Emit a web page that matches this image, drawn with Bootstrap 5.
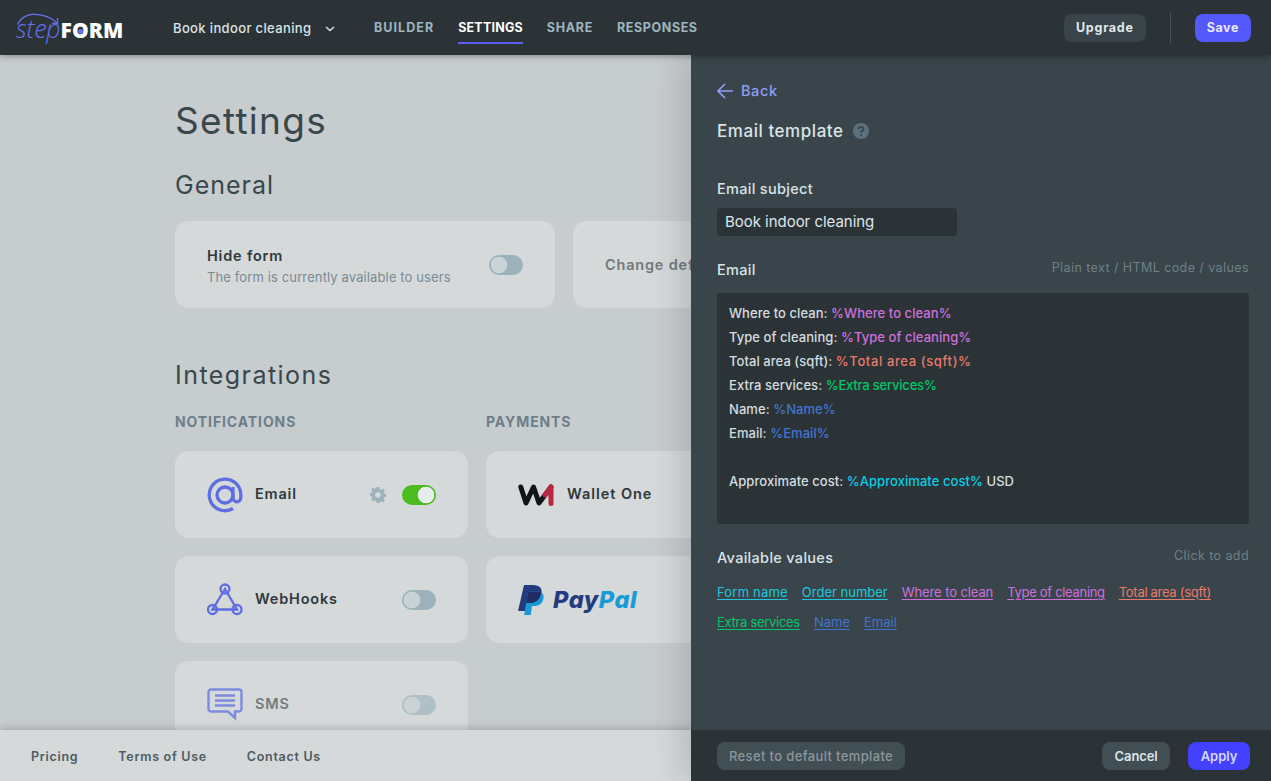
<!DOCTYPE html>
<html lang="en">
<head>
<meta charset="utf-8">
<title>stepFORM settings</title>
<link rel="stylesheet" href="https://cdn.jsdelivr.net/npm/bootstrap@5.3.0/dist/css/bootstrap.min.css">
<style>
html,body{height:100%}
body{font-family:Inter,"Open Sans","Liberation Sans",sans-serif;background:#c7cccf;overflow:hidden;color:#2f383b}
.app-shell{height:781px;width:1271px}
.top-bar{height:55px;background:#2b3336;padding:0 20px 0 16px;position:relative;z-index:3;box-shadow:0 2px 6px rgba(0,0,0,.3);flex:none}
.brand-wrap{width:157px;position:relative;height:55px;line-height:55px;padding-top:1px;flex:none;white-space:nowrap}
.brand-step{font-family:"Open Sans",sans-serif;font-style:italic;font-weight:300;font-size:25px;color:#6470ef;letter-spacing:-.2px}
.brand-form{font-family:"Open Sans",sans-serif;font-weight:800;font-size:21px;color:#fff;letter-spacing:.1px}
.brand-o{position:relative}
.brand-dot{position:absolute;left:50%;top:50%;width:5px;height:5px;margin:-1px 0 0 -2.5px;border-radius:50%;background:#6470ef}
.brand-arc{position:absolute;left:0;top:12px;width:60px;height:16px}
.form-pick{width:201px;font-size:13px;font-weight:500;color:#dce3e6;letter-spacing:.36px;flex:none;padding-top:2px}
.form-pick svg{margin-left:14px}
.tab-row{gap:24px;height:55px}
.tab-row .nav-link{padding:0;height:55px;line-height:55px;font-size:12.5px;font-weight:700;color:#9fb5c0;position:relative}
.tab-row li:nth-child(1) .nav-link{letter-spacing:1.05px}
.tab-row li:nth-child(2) .nav-link{letter-spacing:.2px}
.tab-row li:nth-child(3) .nav-link{letter-spacing:.7px}
.tab-row li:nth-child(4) .nav-link{letter-spacing:.6px}
.tab-row .nav-link.active{color:#fff}
.tab-row .nav-link.active::after{content:"";position:absolute;left:0;right:0;top:42px;height:2px;background:#5b5ff5}
.btn-flat{height:28px;padding:0 12px;font-size:12.5px;font-weight:700;border:0;border-radius:8px;line-height:28px}
.btn-slate{background:#39454a;color:#e0e7ea;letter-spacing:.75px}
.btn-slate:hover{background:#39454a;color:#e0e7ea}
.btn-blue{background:#5558fb;color:#e8e9ff;letter-spacing:.6px}
.btn-blue:hover{background:#5558fb;color:#e8e9ff}
.v-rule{width:1px;height:32px;background:#46535a;margin:0 24px}
.body-row{height:726px}
.left-side{width:691px;flex:none;overflow:hidden}
.left-scroll{padding-left:175px;overflow:hidden;flex:1 1 0;min-height:0}
.page-title{font-size:37px;line-height:44px;font-weight:400;color:#3a474a;margin:44px 0 0;letter-spacing:1.3px}
.sect-title{font-size:25px;line-height:30px;font-weight:400;color:#3a474a;margin:27px 0 0;letter-spacing:1px}
.sect-two{margin-top:52px;letter-spacing:1.45px}
.tile{background:#d5d9da;border:0;border-radius:14px;height:87px;flex:none;padding:0 32px;color:#2f383b;flex-direction:row;align-items:center}
.tile-wide{width:380px}
.tile-mid{width:293px}
.tile-stack{gap:18px;margin-top:21px;width:900px}
.tile-title{font-size:14.5px;font-weight:600;line-height:18px;letter-spacing:.8px}
.tile-mid .tile-title{margin-top:-2px}
.tile-text{padding-top:4px}
.tile-sub{font-size:13px;line-height:18px;color:#7a8b94;letter-spacing:.12px;margin-top:3px}
.dim-text{color:#72797d}
.col-label{font-size:14px;line-height:20px;font-weight:700;color:#6c7f89;letter-spacing:.9px}
.label-row{margin-top:22px;gap:18px}
.label-slot{width:293px;flex:none}
.int-cols{gap:18px;margin-top:19px}
.int-col{width:293px;gap:18px;flex:none}
.icon-slot{width:36px;margin-right:12px;flex:none;display:flex}
.icon-wallet{margin-right:13px}
.wallet-name{letter-spacing:.95px}
.gear{margin-right:16px;flex:none}
.form-switch.tgl-wrap{padding:0;margin:0;min-height:0;height:20px;display:flex}
.form-switch .form-check-input.tgl{width:34px;height:20px;margin:0;border:0;background-color:#9cb3bc;background-image:radial-gradient(circle at 10px 10px,#c8d3d6 8px,transparent 8.6px);background-position:0 0;background-size:auto;border-radius:10px;opacity:1}
.form-switch .form-check-input.tgl:checked{background-color:#4cbd1f;background-image:radial-gradient(circle at 24px 10px,#e7ecec 8px,transparent 8.6px)}
.tile-off .form-check-input.tgl{background-color:#aebfc5;background-image:radial-gradient(circle at 10px 10px,#c9d3d6 8px,transparent 8.6px)}
.tile-off .icon-slot{opacity:.72}
.paypal-word{font-family:Inter,sans-serif;font-weight:800;font-style:italic;font-size:23.5px;letter-spacing:.55px;color:#253b80;margin-left:9px;line-height:30px}
.paypal-word span{color:#179bd7}
.left-foot{height:51px;background:#d5d9da;padding:3px 0 0 31px;gap:40px;position:relative;flex:none;box-shadow:0 -2px 8px rgba(0,0,0,.18)}
.left-foot a{font-size:12.5px;font-weight:600;color:#4e5b60;text-decoration:none;letter-spacing:.7px}
.drawer{width:580px;flex:none;background:#39454a;position:relative;z-index:2;box-shadow:-10px 0 30px rgba(0,0,0,.14)}
.drawer-body{padding:26px 22px 0 26px;flex:1 1 0;min-height:0}
.back-link{font-size:14.5px;line-height:20px;font-weight:500;color:#8e9ff4;text-decoration:none;gap:8px;letter-spacing:.6px}
.drawer-title{font-size:17px;line-height:24px;font-weight:500;color:#dbe3e6;margin:18px 0 0;letter-spacing:.55px;gap:9px}
.field-label{font-size:14.5px;line-height:20px;font-weight:500;color:#dbe3e6;letter-spacing:.3px}
.field-gap-lg{margin-top:36px}
.field-head{margin-top:24px}
.field-hint{font-size:12.5px;color:#6f8087;line-height:16px;letter-spacing:.42px}
.subject-input.form-control{width:240px;height:28px;margin-top:9px;background:#2b3336;border:0;border-radius:4px;color:#dfe6e9;font-size:15px;padding:0 8px 2px;letter-spacing:-.03px}
.mail-box{height:231px;margin-top:13px;background:#2b3336;border-radius:3px;padding:8px 12px;font-size:13px;line-height:24px;font-weight:500;color:#d5dde0;letter-spacing:.06px}
.mail-line{height:24px;white-space:nowrap}
.mail-line .c-red{letter-spacing:.62px}
.mail-line .c-green{letter-spacing:-.2px}
.c-cyan{color:#08cde6}.c-pink{color:#cf6fdc}.c-red{color:#e87a6c}.c-green{color:#00c76a}.c-blue{color:#4273d0}
.chip-row{gap:10px 14px;margin-top:14px;width:500px}
.chip-row a{font-size:13px;line-height:20px;letter-spacing:-.1px;text-underline-offset:2px}
.chip-row a:nth-child(1){letter-spacing:.2px}
.chip-row a:nth-child(2),.chip-row a:nth-child(7),.chip-row a:nth-child(8){letter-spacing:0}
.chip-row a:nth-child(4),.chip-row a:nth-child(5),.chip-row a:nth-child(6){letter-spacing:-.3px}
.chip-row a.c-cyan{color:#1dc8dc}
.drawer-foot{height:51px;background:#2b3336;padding:0 21px 0 26px;flex:none}
.btn-mute{background:#414e54;color:#8c979b;font-weight:500;font-size:13px;padding:0 12px;letter-spacing:.36px}
.btn-mute:hover{background:#414e54;color:#8c979b}
.btn-cancel{background:#414e54;color:#dde5e8;font-size:13px;padding:0 12.5px;margin-right:18px;font-weight:600;letter-spacing:-.1px}
.btn-cancel:hover{background:#414e54;color:#dde5e8}
.btn-apply{background:#4340ff;color:#d5d8ff;font-size:13px;padding:0 12.5px;font-weight:600}
.btn-apply:hover{background:#4340ff;color:#d5d8ff}
</style>
</head>
<body>
<div class="app-shell d-flex flex-column">
  <nav class="top-bar d-flex align-items-center">
    <div class="brand-wrap">
      <svg class="brand-arc" viewBox="0 0 60 16" fill="none" stroke="#6470ef" stroke-width="1.3" stroke-linecap="round"><path d="M1.5 12C6 4.5 13 2 19 2.300C28 2.700 36 6 41 11"/><path d="M41.500 6.500L41.500 11.500L36.500 11.500"/></svg>
      <span class="brand-step">step</span><span class="brand-form">F<span class="brand-o">O<span class="brand-dot"></span></span>RM</span>
    </div>
    <div class="form-pick d-flex align-items-center">Book indoor cleaning<svg width="10" height="6" viewBox="0 0 10 6" fill="none" stroke="#dce3e6" stroke-width="1.500"><path d="M1 1l4 3.500L9 1"/></svg></div>
    <ul class="nav tab-row">
      <li class="nav-item"><a class="nav-link" href="#">BUILDER</a></li>
      <li class="nav-item"><a class="nav-link active" href="#">SETTINGS</a></li>
      <li class="nav-item"><a class="nav-link" href="#">SHARE</a></li>
      <li class="nav-item"><a class="nav-link" href="#">RESPONSES</a></li>
    </ul>
    <div class="ms-auto d-flex align-items-center">
      <button class="btn btn-flat btn-slate">Upgrade</button>
      <div class="v-rule"></div>
      <button class="btn btn-flat btn-blue">Save</button>
    </div>
  </nav>
  <div class="body-row d-flex">
    <div class="left-side d-flex flex-column">
      <main class="left-scroll">
        <h1 class="page-title">Settings</h1>
        <h2 class="sect-title">General</h2>
        <div class="tile-stack d-flex">
          <div class="card tile tile-wide justify-content-between">
            <div class="tile-text">
              <div class="tile-title">Hide form</div>
              <div class="tile-sub">The form is currently available to users</div>
            </div>
            <div class="form-check form-switch tgl-wrap"><input class="form-check-input tgl" type="checkbox" aria-label="Hide form"></div>
          </div>
          <div class="card tile tile-wide"><div class="tile-title dim-text text-nowrap">Change def</div></div>
        </div>
        <h2 class="sect-title sect-two">Integrations</h2>
        <div class="label-row d-flex">
          <div class="col-label label-slot">NOTIFICATIONS</div>
          <div class="col-label label-slot">PAYMENTS</div>
        </div>
        <div class="int-cols d-flex">
          <div class="int-col d-flex flex-column">
            <div class="card tile tile-mid">
              <span class="icon-slot"><svg width="36" height="36" viewBox="0 0 36 36" fill="none" stroke="#5e6de0" stroke-width="3.300"><path d="M26 31.500A15.800 15.800 0 1 1 33.800 18v2.300c0 6-7.800 6-7.800 0V10"/><circle cx="18" cy="18" r="8"/></svg></span>
              <span class="tile-title">Email</span>
              <svg class="gear ms-auto" width="16" height="16" viewBox="0 0 16 16"><path fill="#9cb3bc" fill-rule="evenodd" d="M6.600 0h2.800l.4 2.100 1.300.6L12.900 1.500l2 2-1.300 1.800.6 1.300 2.200.4v2.900l-2.200.4-.6 1.300 1.300 1.800-2 2-1.800-1.200-1.300.5L9.400 16H6.600l-.4-2.200-1.300-.5L3.100 14.500l-2-2 1.300-1.800-.6-1.300L-.1 9V6.100l2.200-.4.600-1.300L1.100 2.500l2-2 1.800 1.300 1.300-.6zM8 5.200a2.800 2.800 0 1 0 0 5.600 2.800 2.800 0 0 0 0-5.600z"/></svg>
              <div class="form-check form-switch tgl-wrap"><input class="form-check-input tgl" type="checkbox" checked aria-label="Email"></div>
            </div>
            <div class="card tile tile-mid">
              <span class="icon-slot"><svg width="36" height="33" viewBox="0 0 36 33" fill="none" stroke="#5e6de0" stroke-width="2.300"><circle cx="18" cy="6" r="4.500"/><circle cx="5.500" cy="26.500" r="4.500"/><circle cx="30" cy="26.500" r="4.500"/><path d="M18 6L5.500 26.500H30Z"/></svg></span>
              <span class="tile-title">WebHooks</span>
              <div class="form-check form-switch tgl-wrap ms-auto"><input class="form-check-input tgl" type="checkbox" aria-label="WebHooks"></div>
            </div>
            <div class="card tile tile-mid tile-off">
              <span class="icon-slot"><svg width="36" height="33" viewBox="0 0 36 33" fill="none" stroke="#5e6de0" stroke-width="2.400"><path d="M4 1.500H32A2.500 2.500 0 0 1 34.500 4V21A2.500 2.500 0 0 1 32 23.500H28V30L21 23.500H4A2.500 2.500 0 0 1 1.500 21V4A2.500 2.500 0 0 1 4 1.500Z"/><path d="M8 7.500H28M8 12.500H28M8 17.500H28" stroke-width="2.600"/></svg></span>
              <span class="tile-title dim-text">SMS</span>
              <div class="form-check form-switch tgl-wrap ms-auto"><input class="form-check-input tgl" type="checkbox" aria-label="SMS"></div>
            </div>
          </div>
          <div class="int-col d-flex flex-column">
            <div class="card tile tile-mid">
              <span class="icon-slot icon-wallet"><svg width="36" height="22" viewBox="0 0 36 22" fill="none" stroke-width="5" stroke-linejoin="round" stroke-linecap="round"><path d="M2.800 3L8 19 15.500 3 21 19 33 3" stroke="#111517"/><path d="M27 11L33 3V19.500" stroke="#b8293f"/></svg></span>
              <span class="tile-title wallet-name">Wallet One</span>
            </div>
            <div class="card tile tile-mid">
              <svg width="26" height="30" viewBox="0 0 26 30"><path fill="#253b80" d="M6 0h9c6.500 0 9.500 3.500 8.500 8.500C22.300 15 17.500 18 11.500 18H9L7.500 26H0z"/><path fill="#179bd7" d="M10 6.500h9.500c4.500 0 6.800 2.800 6 7-1 5.200-4.700 7.500-9.200 7.500h-2.300L12.800 30H6.200z"/><path fill="#222d65" d="M10 6.500h9.500c1.500 0 2.800.3 3.800.9C22.400 14.300 17.700 18 11.500 18H8.100z"/></svg>
              <span class="paypal-word">Pay<span>Pal</span></span>
            </div>
          </div>
        </div>
      </main>
      <footer class="left-foot d-flex align-items-center">
        <a href="#">Pricing</a><a href="#">Terms of Use</a><a href="#">Contact Us</a>
      </footer>
    </div>
    <aside class="drawer d-flex flex-column">
      <div class="drawer-body">
        <a class="back-link d-flex align-items-center" href="#"><svg width="16" height="16" viewBox="0 0 16 16" fill="none" stroke="#8e9ff4" stroke-width="1.700"><path d="M8 1L1 8l7 7M1.200 8H16"/></svg>Back</a>
        <h3 class="drawer-title d-flex align-items-center">Email template<svg width="16" height="16" viewBox="0 0 16 16"><circle cx="8" cy="8" r="8" fill="#5c7180"/><path d="M5.500 6.200C5.500 3.200 10.500 3.200 10.500 6c0 1.900-2.500 1.900-2.500 3.500" fill="none" stroke="#39454a" stroke-width="1.800"/><circle cx="8" cy="12" r="1.100" fill="#39454a"/></svg></h3>
        <div class="field-label field-gap-lg">Email subject</div>
        <input class="form-control subject-input" type="text" value="Book indoor cleaning" aria-label="Email subject">
        <div class="field-head d-flex justify-content-between align-items-start">
          <span class="field-label">Email</span>
          <span class="field-hint">Plain text / HTML code / values</span>
        </div>
        <div class="mail-box">
          <div class="mail-line">Where to clean: <span class="c-pink">%Where to clean%</span></div>
          <div class="mail-line">Type of cleaning: <span class="c-pink">%Type of cleaning%</span></div>
          <div class="mail-line">Total area (sqft): <span class="c-red">%Total area (sqft)%</span></div>
          <div class="mail-line">Extra services: <span class="c-green">%Extra services%</span></div>
          <div class="mail-line">Name: <span class="c-blue">%Name%</span></div>
          <div class="mail-line">Email: <span class="c-blue">%Email%</span></div>
          <div class="mail-line"></div>
          <div class="mail-line">Approximate cost: <span class="c-cyan">%Approximate cost%</span> USD</div>
        </div>
        <div class="field-head d-flex justify-content-between align-items-start">
          <span class="field-label">Available values</span>
          <span class="field-hint">Click to add</span>
        </div>
        <div class="chip-row d-flex flex-wrap">
          <a class="c-cyan" href="#">Form name</a><a class="c-cyan" href="#">Order number</a><a class="c-pink" href="#">Where to clean</a><a class="c-pink" href="#">Type of cleaning</a><a class="c-red" href="#">Total area (sqft)</a><a class="c-green" href="#">Extra services</a><a class="c-blue" href="#">Name</a><a class="c-blue" href="#">Email</a>
        </div>
      </div>
      <div class="drawer-foot d-flex align-items-center">
        <button class="btn btn-flat btn-mute">Reset to default template</button>
        <button class="btn btn-flat btn-cancel ms-auto">Cancel</button>
        <button class="btn btn-flat btn-apply">Apply</button>
      </div>
    </aside>
  </div>
</div>
<script src="https://cdn.jsdelivr.net/npm/bootstrap@5.3.0/dist/js/bootstrap.bundle.min.js"></script>
</body>
</html>
